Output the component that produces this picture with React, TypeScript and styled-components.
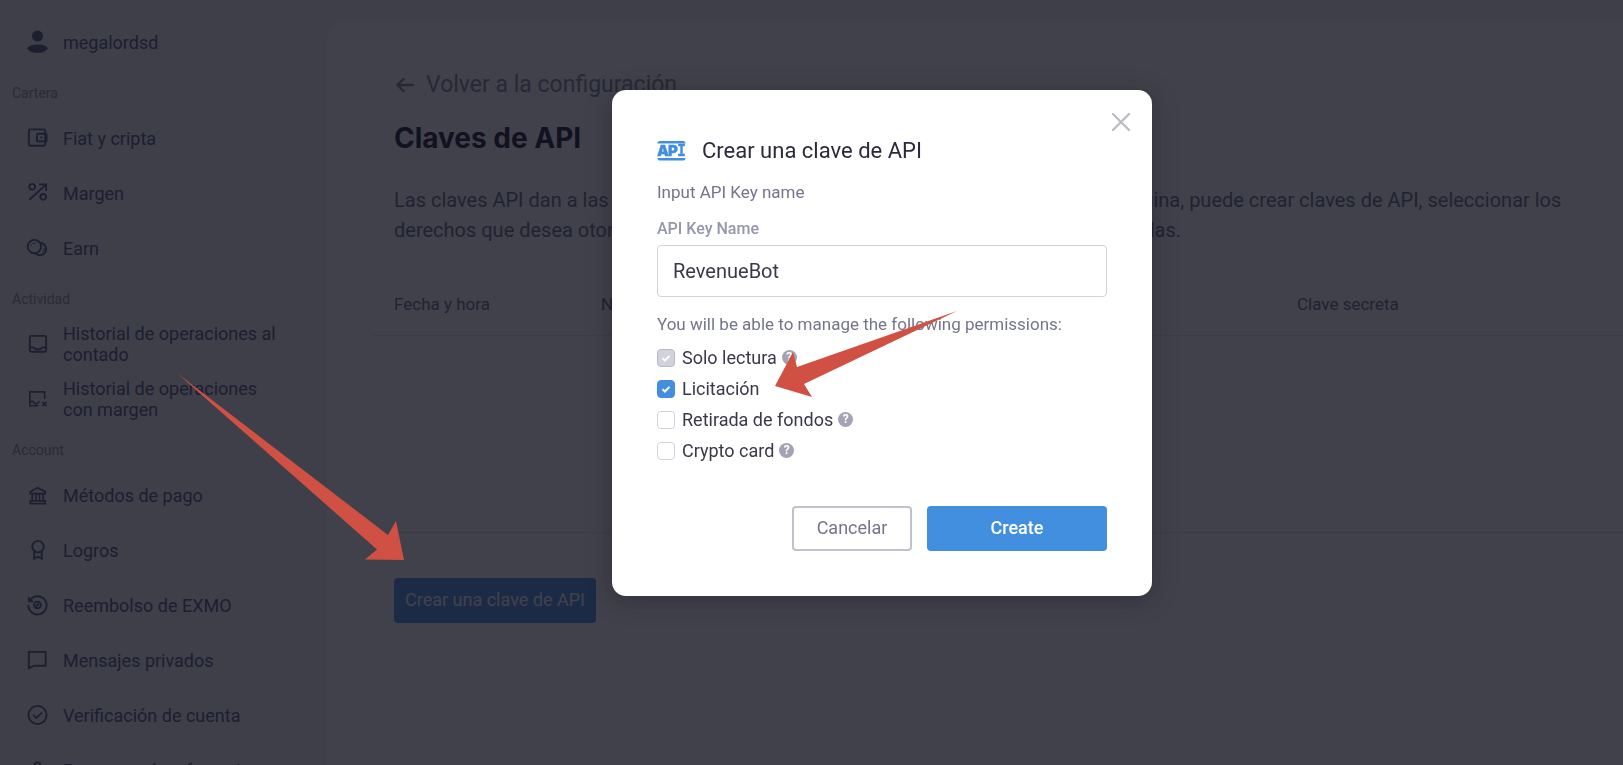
import React from "react";
import styled, { createGlobalStyle } from "styled-components";

const Global = createGlobalStyle`
  * { box-sizing: border-box; }
  body { margin: 0; background: #f2f2f7; font-family: Roboto, "Liberation Sans", sans-serif; overflow: hidden; }
  h1, h2, p, ul { margin: 0; padding: 0; }
  button, input { font-family: inherit; }
`;

const Page = styled.div`
  display: flex;
  height: 100vh;
  overflow: hidden;
`;

const Sidebar = styled.nav`
  flex: 0 0 327px;
  padding-top: 16px;
  overflow: hidden;
`;

const SectionTitle = styled.h2`
  height: 41px;
  padding: 4px 0 0 12px;
  line-height: 37px;
  font-size: 14px;
  font-weight: 400;
  color: #8c8ea3;
`;

const NavList = styled.ul`
  list-style: none;
`;

const NavLink = styled.a`
  display: flex;
  align-items: center;
  gap: 14px;
  height: 55px;
  padding: 0 44px 3px 26px;
  font-size: 18px;
  line-height: 21px;
  color: #4e5378;
  text-decoration: none;

  svg { flex: none; }
`;

const Main = styled.main`
  flex: 1;
  min-width: 0;
  margin-top: 20px;
  padding: 47px 0 0 45px;
  background: #fff;
  border-top-left-radius: 18px;
`;

const BackLink = styled.a`
  display: flex;
  align-items: center;
  gap: 10px;
  margin-left: 22px;
  height: 36px;
  font-size: 23px;
  line-height: 36px;
  color: #7f8199;
  text-decoration: none;
`;

const Title = styled.h1`
  margin: 15px 22px 0;
  font-family: Inter, "Liberation Sans", sans-serif;
  font-size: 28px;
  line-height: 40px;
  font-weight: 700;
  color: #0f102b;
`;

const Intro = styled.p`
  margin: 27px 45px 0 22px;
  font-size: 20px;
  line-height: 30px;
  color: #62657f;
`;

const KeysTable = styled.table`
  width: 100%;
  margin-top: 30px;
  border-collapse: collapse;
  table-layout: fixed;

  th {
    height: 60px;
    padding: 0 0 2px 22px;
    text-align: left;
    font-size: 17px;
    font-weight: 400;
    color: #5f6280;
    border-bottom: 1px solid #e8e8ef;
  }
  th:first-child { width: 207px; }
  td { height: 197px; border-bottom: 1px solid #e8e8ef; }
`;

const Button = styled.button<{ $kind: "primary" | "outline"; $wide?: boolean }>`
  height: 45px;
  padding: 0 ${(p) => (p.$kind === "primary" && !p.$wide ? 11 : 0)}px 2px;
  min-width: ${(p) => (p.$wide ? 180 : 120)}px;
  border: ${(p) => (p.$kind === "outline" ? "2px solid #c1c1cd" : "0")};
  border-radius: 4px;
  background: ${(p) => (p.$kind === "outline" ? "#fff" : "#418fde")};
  color: ${(p) => (p.$kind === "outline" ? "#74758c" : "#fff")};
  font-size: 18px;
  font-weight: ${(p) => (p.$wide ? 500 : 400)};
`;

const PageAction = styled.div`
  margin: 45px 22px 0;
`;

const Backdrop = styled.div`
  position: fixed;
  inset: 0;
  display: flex;
  justify-content: center;
  align-items: flex-start;
  padding: 90px 0 0 141px;
  background: rgba(18, 18, 30, 0.8);
`;

const Dialog = styled.form`
  position: relative;
  width: 540px;
  padding: 45px;
  border-radius: 14px;
  background: #fff;
  box-shadow: 0 4px 24px rgba(20, 18, 30, 0.35);
`;

const CloseButton = styled.button`
  position: absolute;
  top: 21px;
  right: 20px;
  display: flex;
  padding: 0;
  border: 0;
  background: none;
`;

const DialogHead = styled.div`
  display: flex;
  align-items: center;
  gap: 16px;
  height: 31px;
`;

const DialogTitle = styled.h2`
  font-size: 22px;
  line-height: 30px;
  font-weight: 400;
  color: #2b2a3d;
`;

const Hint = styled.p`
  font-size: 17px;
  line-height: 24px;
  color: #74758c;
`;

const NameHint = styled(Hint)`
  margin-top: 14px;
`;

const FieldLabel = styled.label`
  display: block;
  margin-top: 14px;
  font-size: 16px;
  line-height: 22px;
  font-weight: 500;
  color: #9595ab;
`;

const TextInput = styled.input`
  display: block;
  width: 100%;
  height: 52px;
  margin: 5px 0 15px;
  padding: 0 15px;
  border: 1px solid #d2d2dd;
  border-radius: 4px;
  background: #fff;
  font-size: 20px;
  color: #3a394b;
  outline: none;
`;

const Permissions = styled.div`
  margin-top: 6px;
`;

const PermissionRow = styled.div`
  display: flex;
  align-items: center;
  gap: 5px;
  height: 31px;
`;

const CheckLabel = styled.label`
  display: flex;
  align-items: center;
  gap: 7px;
  font-size: 18px;
  line-height: 31px;
  color: #3a394b;
`;

const Checkbox = styled.input`
  appearance: none;
  width: 18px;
  height: 18px;
  margin: 0;
  border: 1px solid #d2d2dd;
  border-radius: 4px;
  background: #fff center / 16px no-repeat;

  &:checked {
    border-color: #418fde;
    background-color: #418fde;
    background-image: url("data:image/svg+xml,%3Csvg xmlns='http://www.w3.org/2000/svg' viewBox='0 0 16 16'%3E%3Cpath d='M4.5 8.2l2.4 2.3 4.6-4.6' fill='none' stroke='white' stroke-width='2'/%3E%3C/svg%3E");
  }
  &:disabled {
    border-color: #b9b9c6;
    background-color: #d2d2dd;
  }
`;

const HelpBadge = styled.span`
  display: flex;
  align-items: center;
  justify-content: center;
  width: 15px;
  height: 15px;
  border-radius: 50%;
  background: #a3a3b5;
  color: #fff;
  font-size: 12px;
  line-height: 15px;
  font-weight: 700;
`;

const DialogActions = styled.div`
  display: flex;
  justify-content: flex-end;
  gap: 15px;
  margin-top: 40px;
`;

const Pointers = styled.svg`
  position: fixed;
  top: 0;
  left: 0;
  width: 1000px;
  height: 600px;
  pointer-events: none;
`;

const icons = {
  user: (
    <g fill="currentColor" stroke="none">
      <circle cx="12" cy="5.8" r="5.8" />
      <path d="M1 18.5C3.500 15.500 7 14.500 12 14.500s8.500 1 11 4c-2.500 3.500-6.500 5-11 5s-8.500-1.500-11-5z" />
    </g>
  ),
  wallet: (
    <>
      <rect x="3" y="3" width="17" height="17" rx="1.500" />
      <rect x="11.500" y="7.500" width="10" height="8" rx="1" />
      <path d="M15 11.500h2" />
    </>
  ),
  margin: (
    <>
      <circle cx="6.500" cy="5.500" r="3" />
      <circle cx="18" cy="16" r="3" />
      <path d="M3.500 19L21 3M13.500 3H21v7" />
    </>
  ),
  coins: (
    <>
      <circle cx="8.800" cy="10.500" r="7" />
      <path d="M14.800 6.500a6.500 6.500 0 1 1-5 11" />
      <path d="M5 10a4 4 0 0 1 5-3M19 12a4 4 0 0 1-2 4" strokeWidth="1" />
    </>
  ),
  tray: (
    <>
      <rect x="4" y="3.500" width="17" height="16.500" rx="1.500" />
      <path d="M4 15.500h4l2 2h5l2-2h4" />
    </>
  ),
  trayX: (
    <>
      <path d="M13 19H4V4.500h15.500V12M4 14.500h3l2.500 2.500h2l2.500-2.500M17 15l4.500 4.500M21.500 15L17 19.500" strokeWidth="1.700" />
    </>
  ),
  bank: (
    <>
      <path d="M4.500 10.500V8.500L12 4.500l8 4v2zM6.500 11v7M10.500 11v7M14 11v7M18 11v7M4.500 18.200h15.500V21H4.500z" strokeWidth="1.800" />
      <path d="M12 7.500v.5" />
    </>
  ),
  award: (
    <>
      <circle cx="12.500" cy="8.500" r="6" />
      <path d="M8.500 13.500V21l4-2 4 2v-7.500" />
    </>
  ),
  cashback: (
    <>
      <path d="M4.500 6.500A9.500 9.500 0 1 1 2.500 12" />
      <path d="M2.500 3.500v5h5z" fill="currentColor" strokeWidth="1" />
      <circle cx="12" cy="12" r="3.500" />
      <path d="M10.500 13.500l3-3" />
    </>
  ),
  message: <path d="M3 3.500h17.500V18H8.500L3 20.500z" />,
  verified: (
    <>
      <circle cx="12" cy="12" r="9.500" />
      <path d="M7.500 12l3.300 3 6-5.500" />
    </>
  ),
  people: <circle cx="12" cy="7" r="3" />,
};

type IconName = keyof typeof icons;

const NavIcon = ({ name }: { name: IconName }) => (
  <svg width="23" height="24" viewBox="0 0 24 24" fill="none" stroke="currentColor" strokeWidth="2" aria-hidden="true">
    {icons[name]}
  </svg>
);

const sections: { title: string; items: [IconName, string][] }[] = [
  { title: "Cartera", items: [["wallet", "Fiat y cripta"], ["margin", "Margen"], ["coins", "Earn"]] },
  {
    title: "Actividad",
    items: [["tray", "Historial de operaciones al contado"], ["trayX", "Historial de operaciones con margen"]],
  },
  {
    title: "Account",
    items: [
      ["bank", "Métodos de pago"],
      ["award", "Logros"],
      ["cashback", "Reembolso de EXMO"],
      ["message", "Mensajes privados"],
      ["verified", "Verificación de cuenta"],
      ["people", "Programa de referencia"],
    ],
  },
];

const permissions = [
  { id: "read", label: "Solo lectura", checked: true, disabled: true, help: true },
  { id: "trade", label: "Licitación", checked: true, disabled: false, help: false },
  { id: "withdraw", label: "Retirada de fondos", checked: false, disabled: false, help: true },
  { id: "card", label: "Crypto card", checked: false, disabled: false, help: true },
];

const ApiLogo = () => (
  <svg width="29" height="20" viewBox="0 0 29 20" fill="#418fde" aria-hidden="true">
    <path d="M2 0h25l1.500 1.500v1H.500v-1zM.500 17h28v1L27 19.500H2L.500 18z" />
    <text y="15.300" fontFamily="Inter, sans-serif" fontWeight="900" fontSize="15" stroke="#418fde" strokeWidth="0.300">
      <tspan x="0">A</tspan>
      <tspan x="11">P</tspan>
      <tspan x="20" fontFamily="DejaVu Sans Mono, monospace">I</tspan>
    </text>
  </svg>
);

export default function App() {
  return (
    <>
      <Global />
      <Page>
        <Sidebar>
          <NavLink href="#profile">
            <NavIcon name="user" />
            megalordsd
          </NavLink>
          {sections.map((section) => (
            <section key={section.title}>
              <SectionTitle>{section.title}</SectionTitle>
              <NavList>
                {section.items.map(([icon, label]) => (
                  <li key={label}>
                    <NavLink href="#item">
                      <NavIcon name={icon} />
                      {label}
                    </NavLink>
                  </li>
                ))}
              </NavList>
            </section>
          ))}
        </Sidebar>
        <Main>
          <BackLink href="#settings">
            <svg width="22" height="20" viewBox="0 0 22 20" fill="none" stroke="currentColor" strokeWidth="2.400" strokeLinecap="round" aria-hidden="true">
              <path d="M3.500 10H19M9.500 4l-6 6 6 6" />
            </svg>
            Volver a la configuración
          </BackLink>
          <Title>Claves de API</Title>
          <Intro>
            Las claves API dan a las aplicaciones de terceros el acceso a una cuenta. En esta página, puede crear claves de API,
            seleccionar los derechos que desea otorgar a las aplicaciones externas y borrar las claves de API dadas.
          </Intro>
          <KeysTable>
            <thead>
              <tr>
                <th>Fecha y hora</th>
                <th>Nombre</th>
                <th>Clave pública</th>
                <th>Clave secreta</th>
              </tr>
            </thead>
            <tbody>
              <tr>
                <td colSpan={4} />
              </tr>
            </tbody>
          </KeysTable>
          <PageAction>
            <Button type="button" $kind="primary">Crear una clave de API</Button>
          </PageAction>
        </Main>
      </Page>

      <Backdrop>
        <Dialog role="dialog" aria-labelledby="dialog-title">
          <CloseButton type="button" aria-label="Cerrar">
            <svg width="22" height="22" viewBox="0 0 22 22" fill="none" stroke="#b9b9c9" strokeWidth="2.200" strokeLinecap="round">
              <path d="M3 3l16 16M19 3L3 19" />
            </svg>
          </CloseButton>
          <DialogHead>
            <ApiLogo />
            <DialogTitle id="dialog-title">Crear una clave de API</DialogTitle>
          </DialogHead>
          <NameHint>Input API Key name</NameHint>
          <FieldLabel htmlFor="key-name">API Key Name</FieldLabel>
          <TextInput id="key-name" defaultValue="RevenueBot" />
          <Hint>You will be able to manage the following permissions:</Hint>
          <Permissions>
            {permissions.map((p) => (
              <PermissionRow key={p.id}>
                <CheckLabel htmlFor={p.id}>
                  <Checkbox id={p.id} type="checkbox" defaultChecked={p.checked} disabled={p.disabled} />
                  {p.label}
                </CheckLabel>
                {p.help && <HelpBadge>?</HelpBadge>}
              </PermissionRow>
            ))}
          </Permissions>
          <DialogActions>
            <Button type="button" $kind="outline">Cancelar</Button>
            <Button type="submit" $kind="primary" $wide>Create</Button>
          </DialogActions>
        </Dialog>
      </Backdrop>

      <Pointers viewBox="0 0 1000 600" fill="#d05144" aria-hidden="true">
        <path d="M178 374L388 535L396 521L404 560L365 559.500L377 549.500Z" />
        <path d="M957 311L797 367L793 352L775 386L812 397L804 384Z" />
      </Pointers>
    </>
  );
}
